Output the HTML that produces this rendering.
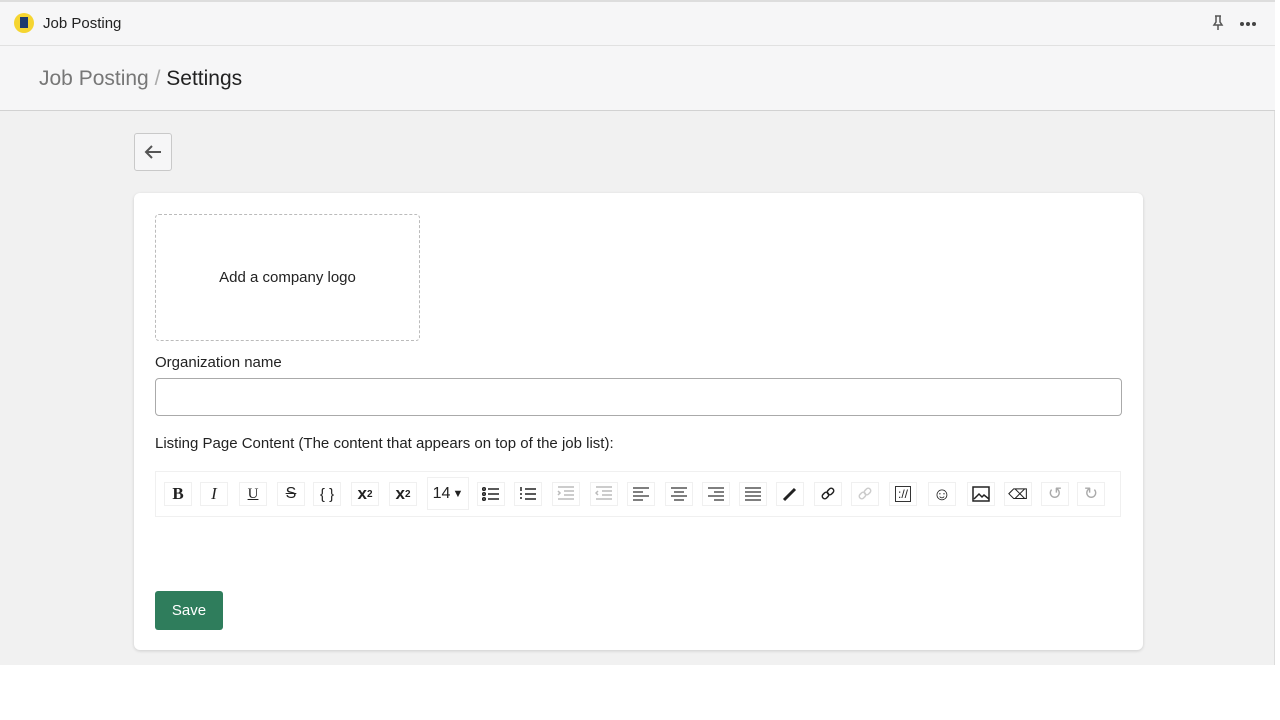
<!DOCTYPE html><html><head><style>
body{margin:0;width:1280px;height:720px;background:#fff;font-family:"Liberation Sans",sans-serif;position:relative;overflow:hidden}
.top{position:absolute;left:0;top:0;width:1275px;height:46px;background:#f6f6f7;border-top:2px solid #ddd;border-bottom:1px solid #e1e1e1;box-sizing:border-box}
.bc{position:absolute;left:0;top:46px;width:1275px;height:65px;background:#f6f6f7;border-bottom:1px solid #d2d2d2;box-sizing:border-box}
.main{position:absolute;left:0;top:111px;width:1275px;height:554px;background:#f1f1f1;border-right:1px solid #ddd;box-sizing:border-box}
.card{position:absolute;left:134px;top:193px;width:1009px;height:457px;background:#fff;border-radius:6px;box-shadow:0 1px 3px rgba(0,0,0,.15)}
.tb{position:absolute;top:471px;left:155px;width:966px;height:46px;border:1px solid #f0f0f0;box-sizing:border-box}
.b{position:absolute;top:482px;width:28px;height:24px;border:1px solid #f0f0f0;box-sizing:border-box;display:flex;align-items:center;justify-content:center;font-size:17px;color:#222}
.b svg{stroke:currentColor;fill:none;stroke-width:1.5}
</style></head><body>
<div class="top">
<div style="position:absolute;left:14px;top:11px;width:20px;height:20px;border-radius:50%;background:#f5d531"><div style="position:absolute;left:6px;top:4px;width:8px;height:11px;background:#1d3a6e"></div></div>
<div style="position:absolute;left:43px;top:13px;font-size:15px;color:#222">Job Posting</div>
<svg style="position:absolute;left:1211px;top:13px" width="14" height="16" viewBox="0 0 14 16" fill="none" stroke="#555" stroke-width="1.5"><path d="M4 1h6M5 1v6l-2 3h8l-2-3V1M7 10v5"/></svg>
<svg style="position:absolute;left:1239px;top:19px" width="18" height="6"><circle cx="3" cy="3" r="2" fill="#444"/><circle cx="9" cy="3" r="2" fill="#444"/><circle cx="15" cy="3" r="2" fill="#444"/></svg>
</div>
<div class="bc"><div style="position:absolute;left:39px;top:21px;font-size:21px;color:#777">Job Posting <span style="color:#aaa">/</span> <span style="color:#222">Settings</span></div></div>
<div class="main"></div>
<div style="position:absolute;left:134px;top:133px;width:36px;height:36px;border:1px solid #c9c9c9;border-radius:3px;background:#f6f6f7"><svg style="position:absolute;left:9px;top:10px" width="18" height="16" viewBox="0 0 18 16" fill="none" stroke="#555" stroke-width="2"><path d="M17 8H2M8 2L2 8l6 6"/></svg></div>
<div class="card"></div>
<div style="position:absolute;left:155px;top:214px;width:265px;height:127px;border:1px dashed #bbb;border-radius:4px;box-sizing:border-box;display:flex;align-items:center;justify-content:center;font-size:15px;color:#222">Add a company logo</div>
<div style="position:absolute;left:155px;top:354px;font-size:15px;color:#222">Organization name</div>
<div style="position:absolute;left:155px;top:378px;width:967px;height:38px;border:1px solid #aaa;border-radius:4px;box-sizing:border-box"></div>
<div style="position:absolute;left:155px;top:435px;font-size:15px;color:#222">Listing Page Content (The content that appears on top of the job list):</div>
<div class="tb"></div>
<div class="b" style="left:164px;font-weight:bold;font-family:'Liberation Serif'">B</div>
<div class="b" style="left:200px;font-style:italic;font-family:'Liberation Serif'">I</div>
<div class="b" style="left:239px;text-decoration:underline;font-size:15px;font-family:'Liberation Serif'">U</div>
<div class="b" style="left:277px;text-decoration:line-through;font-size:16px">S</div>
<div class="b" style="left:313px;font-size:15px">{ }</div>
<div class="b" style="left:351px;font-weight:bold">x<sup style="font-size:10px">2</sup></div>
<div class="b" style="left:389px;font-weight:bold">x<sub style="font-size:10px">2</sub></div>
<div class="b" style="left:427px;top:477px;width:42px;height:33px;font-size:16px">14<span style="font-size:11px;margin-left:2px">▼</span></div>
<div class="b" style="left:477px"><svg width="18" height="16"><circle cx="2" cy="3" r="1.3"/><circle cx="2" cy="8" r="1.3"/><circle cx="2" cy="13" r="1.3"/><path d="M6 3h11M6 8h11M6 13h11"/></svg></div>
<div class="b" style="left:514px"><svg width="18" height="16"><path d="M2 1v4M1 8h2M1 12h2M6 3h11M6 8h11M6 13h11"/></svg></div>
<div class="b" style="left:552px;color:#bbb"><svg width="18" height="16"><path d="M1 1h16M7 5h10M1 5l2 2-2 2M7 9h10M1 13h16"/></svg></div>
<div class="b" style="left:590px;color:#bbb"><svg width="18" height="16"><path d="M1 1h16M7 5h10M3 5L1 7l2 2M7 9h10M1 13h16"/></svg></div>
<div class="b" style="left:627px;color:#555"><svg width="18" height="16"><path d="M1 2h16M1 6h10M1 10h16M1 14h10"/></svg></div>
<div class="b" style="left:665px;color:#555"><svg width="18" height="16"><path d="M1 2h16M4 6h10M1 10h16M4 14h10"/></svg></div>
<div class="b" style="left:702px;color:#555"><svg width="18" height="16"><path d="M1 2h16M7 6h10M1 10h16M7 14h10"/></svg></div>
<div class="b" style="left:739px;color:#555"><svg width="18" height="16"><path d="M1 2h16M1 6h16M1 10h16M1 14h16"/></svg></div>
<div class="b" style="left:776px"><svg width="16" height="16"><path d="M2 14L13 3" stroke-width="3"/></svg></div>
<div class="b" style="left:814px"><svg width="16" height="16"><rect x="2" y="7" width="7" height="5" rx="2.5" transform="rotate(-45 5.5 9.5)"/><rect x="7" y="3" width="7" height="5" rx="2.5" transform="rotate(-45 10.5 5.5)"/></svg></div>
<div class="b" style="left:851px;color:#ccc"><svg width="16" height="16"><rect x="2" y="7" width="7" height="5" rx="2.5" transform="rotate(-45 5.5 9.5)"/><rect x="7" y="3" width="7" height="5" rx="2.5" transform="rotate(-45 10.5 5.5)"/></svg></div>
<div class="b" style="left:889px;font-size:12px"><span style="border:1.5px solid #333;padding:0 2px">://</span></div>
<div class="b" style="left:928px;font-size:18px">☺</div>
<div class="b" style="left:967px"><svg width="18" height="16"><rect x="1" y="1" width="16" height="14"/><path d="M2 13l5-5 3 3 2-2 5 4"/></svg></div>
<div class="b" style="left:1004px;font-size:14px">⌫</div>
<div class="b" style="left:1041px;color:#aaa">↺</div>
<div class="b" style="left:1077px;color:#aaa">↻</div>
<div style="position:absolute;left:155px;top:591px;width:68px;height:39px;background:#2f7d5c;border-radius:3px;color:#fff;font-size:15px;display:flex;align-items:center;justify-content:center">Save</div>
</body></html>
